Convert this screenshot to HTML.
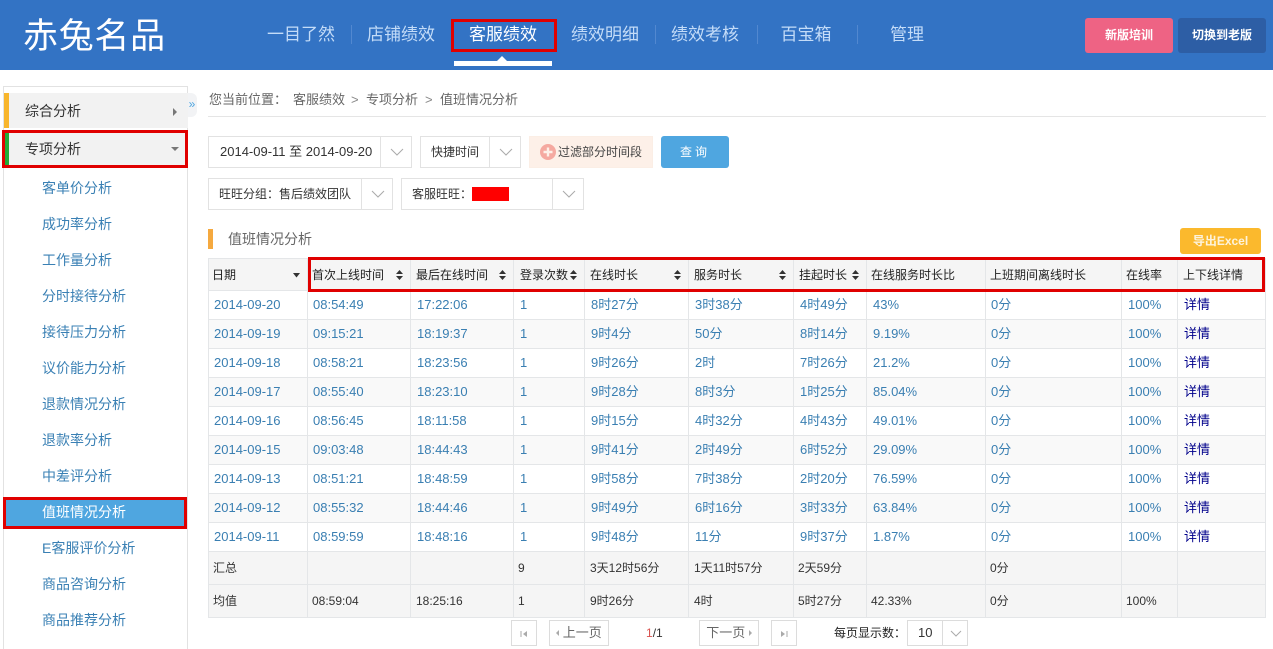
<!DOCTYPE html>
<html lang="zh">
<head>
<meta charset="utf-8">
<title>值班情况分析</title>
<style>
*{box-sizing:border-box}
html,body{margin:0;padding:0;width:1273px;height:649px;overflow:hidden;background:#fff}
body{font-family:"Liberation Sans","Noto Sans CJK SC",sans-serif;font-size:12px;color:#333;position:relative}
.a{position:absolute;white-space:nowrap}
#hd{left:0;top:0;width:1273px;height:70px;background:#3373c4}
.nav{top:22px;height:26px;line-height:26px;font-size:17px;color:#c4dcf8;width:80px;text-align:center}
.sep{top:25px;width:1px;height:19px;background:#5288d0}
.red{border:3px solid #e00000;background:transparent}
.topbtn{top:18px;width:88px;height:35px;line-height:35px;text-align:center;color:#fff;font-weight:bold;border-radius:3px;font-size:12px}
.side{left:42px;width:100px;height:20px;line-height:20px;font-size:14px;color:#3a80b4}
.bc{top:91px;height:18px;line-height:18px;font-size:13px;color:#666}
.box{border:1px solid #e2e2e2;height:32px;line-height:30px;background:#fff}
.dv{top:0;width:1px;height:30px;background:#e2e2e2;position:absolute}
.chev{position:absolute;top:11px}
table{border-collapse:collapse;table-layout:fixed;width:1057px;left:208px;top:258px;position:absolute}
td,th{border:1px solid #e4e6e8;padding:0 0 0 5px;text-align:left;font-weight:normal;overflow:hidden;white-space:nowrap;position:relative;line-height:18px}
th{height:32px;background:#f5f5f5;color:#222;font-size:12px;padding-left:4px}
th:first-child{padding-left:3px}
th:nth-child(3),th:nth-child(5),th:nth-child(6),th:nth-child(7),th:nth-child(11){padding-left:5px}
th:nth-child(4){padding-left:6px}
.r td{height:29px;font-size:13px;color:#3a7fb2;padding-left:6px}
.r td:nth-child(1),.r td:nth-child(2),.r td:nth-child(9){padding-left:5px}
.r:nth-child(even) td{background:#f9f9f9}
.r td:last-child{color:#00008b}
.s td{height:33px;font-size:12px;background:#f5f5f5;color:#333;padding-left:4px}
.s td:nth-child(3),.s td:nth-child(5),.s td:nth-child(6){padding-left:5px}
.sort{position:absolute;right:7px;top:11px;width:7px;height:10px}
.pg{top:620px;height:26px;border:1px solid #dcdcdc;line-height:24px;text-align:center;color:#666;font-size:14px;background:#fff}
.tri{display:inline-block;width:0;height:0;border:3px solid transparent;vertical-align:1px}
</style>
</head>
<body>
<div class="a" id="hd"></div>
<div class="a" style="left:23px;top:13px;height:48px;line-height:48px;font-size:35px;color:#fff;letter-spacing:.7px;font-weight:400">赤兔名品</div>

<div class="a nav" style="left:261px">一目了然</div>
<div class="a sep" style="left:351px"></div>
<div class="a nav" style="left:361px">店铺绩效</div>
<div class="a nav" style="left:463px;color:#fff">客服绩效</div>
<div class="a nav" style="left:565px">绩效明细</div>
<div class="a sep" style="left:655px"></div>
<div class="a nav" style="left:665px">绩效考核</div>
<div class="a sep" style="left:757px"></div>
<div class="a nav" style="left:766px">百宝箱</div>
<div class="a sep" style="left:857px"></div>
<div class="a nav" style="left:867px">管理</div>
<div class="a red" style="left:451px;top:19px;width:106px;height:33px"></div>
<div class="a" style="left:454px;top:61px;width:98px;height:5px;background:#fff"></div>
<div class="a" style="left:497px;top:56px;width:0;height:0;border:5px solid transparent;border-top:0;border-bottom:5px solid #fff"></div>
<div class="a topbtn" style="left:1085px;background:#ee6384">新版培训</div>
<div class="a topbtn" style="left:1178px;background:#2d5ea5">切换到老版</div>

<!-- sidebar -->
<div class="a" style="left:3px;top:86px;width:185px;height:570px;border:1px solid #e2e2e2;border-bottom:0"></div>
<div class="a" style="left:187px;top:93px;width:10px;height:24px;background:#f2f3f5;border-radius:0 6px 6px 0;color:#4fa6e0;font-size:12px;line-height:22px;text-align:center">»</div>
<div class="a" style="left:4px;top:93px;width:184px;height:35px;background:#f2f2f2"></div>
<div class="a" style="left:4px;top:93px;width:5px;height:35px;background:#f8b62d"></div>
<div class="a" style="left:25px;top:101px;height:20px;line-height:20px;font-size:14px;color:#333">综合分析</div>
<div class="a" style="left:173px;top:108px;width:0;height:0;border:4px solid transparent;border-right:0;border-left:4px solid #777"></div>
<div class="a" style="left:4px;top:131px;width:184px;height:36px;background:#f2f2f2"></div>
<div class="a" style="left:5px;top:133px;width:4px;height:32px;background:#22ac38"></div>
<div class="a" style="left:25px;top:139px;height:20px;line-height:20px;font-size:14px;color:#333">专项分析</div>
<div class="a" style="left:171px;top:147px;width:0;height:0;border:4px solid transparent;border-bottom:0;border-top:4px solid #777"></div>
<div class="a red" style="left:2px;top:130px;width:186px;height:38px"></div>

<div class="a side" style="top:178px">客单价分析</div>
<div class="a side" style="top:214px">成功率分析</div>
<div class="a side" style="top:250px">工作量分析</div>
<div class="a side" style="top:286px">分时接待分析</div>
<div class="a side" style="top:322px">接待压力分析</div>
<div class="a side" style="top:358px">议价能力分析</div>
<div class="a side" style="top:394px">退款情况分析</div>
<div class="a side" style="top:430px">退款率分析</div>
<div class="a side" style="top:466px">中差评分析</div>
<div class="a" style="left:4px;top:498px;width:183px;height:30px;background:#4fa6e0"></div>
<div class="a side" style="top:502px;color:#fff">值班情况分析</div>
<div class="a red" style="left:3px;top:497px;width:184px;height:32px"></div>
<div class="a side" style="top:538px">E客服评价分析</div>
<div class="a side" style="top:574px">商品咨询分析</div>
<div class="a side" style="top:610px">商品推荐分析</div>

<!-- breadcrumb -->
<div class="a bc" style="left:209px">您当前位置：</div>
<div class="a bc" style="left:293px">客服绩效</div>
<div class="a bc" style="left:351px;color:#888">&gt;</div>
<div class="a bc" style="left:366px">专项分析</div>
<div class="a bc" style="left:425px;color:#888">&gt;</div>
<div class="a bc" style="left:440px">值班情况分析</div>
<div class="a" style="left:208px;top:116px;width:1058px;height:1px;background:#e5e5e5"></div>

<!-- filters -->
<div class="a box" style="left:208px;top:136px;width:204px;font-size:13px;padding-left:11px">2014-09-11 至 2014-09-20
  <div class="dv" style="left:171px"></div>
  <svg class="chev" style="left:181px" width="14" height="8" viewBox="0 0 14 8"><path d="M1 1l6 6 6-6" fill="none" stroke="#aaa"/></svg>
</div>
<div class="a box" style="left:420px;top:136px;width:101px;padding-left:10px">快捷时间
  <div class="dv" style="left:68px"></div>
  <svg class="chev" style="left:78px" width="14" height="8" viewBox="0 0 14 8"><path d="M1 1l6 6 6-6" fill="none" stroke="#aaa"/></svg>
</div>
<div class="a" style="left:529px;top:136px;width:124px;height:32px;background:#fdf0e8;border:1px solid #fbeee5;line-height:30px;padding-left:28px;color:#444">过滤部分时间段</div>
<svg class="a" style="left:540px;top:144px" width="16" height="16" viewBox="0 0 16 16"><circle cx="8" cy="8" r="8" fill="#f5a9a0"/><path d="M8 3.500v9M3.500 8h9" stroke="#fdf0e8" stroke-width="2.400"/></svg>
<div class="a" style="left:661px;top:136px;width:68px;height:32px;background:#4fa6e0;border-radius:3px;color:#fff;line-height:32px;text-align:center;letter-spacing:3px">查询</div>

<div class="a box" style="left:208px;top:178px;width:185px;padding-left:10px">旺旺分组：售后绩效团队
  <div class="dv" style="left:152px"></div>
  <svg class="chev" style="left:162px" width="14" height="8" viewBox="0 0 14 8"><path d="M1 1l6 6 6-6" fill="none" stroke="#aaa"/></svg>
</div>
<div class="a box" style="left:401px;top:178px;width:183px;padding-left:10px">客服旺旺：
  <div class="dv" style="left:150px"></div>
  <svg class="chev" style="left:160px" width="14" height="8" viewBox="0 0 14 8"><path d="M1 1l6 6 6-6" fill="none" stroke="#aaa"/></svg>
</div>
<div class="a" style="left:472px;top:187px;width:37px;height:14px;background:#f00"></div>

<!-- section title -->
<div class="a" style="left:208px;top:229px;width:5px;height:20px;background:#f5a93f"></div>
<div class="a" style="left:228px;top:229px;height:20px;line-height:20px;font-size:14px;color:#666">值班情况分析</div>
<div class="a" style="left:1180px;top:228px;width:81px;height:26px;background:#fbb92d;border-radius:3px;color:#fdf3dc;line-height:26px;text-align:center;font-weight:bold">导出Excel</div>

<!-- table -->
<table>
<colgroup><col style="width:99px"><col style="width:103px"><col style="width:103px"><col style="width:71px"><col style="width:104px"><col style="width:105px"><col style="width:73px"><col style="width:119px"><col style="width:136px"><col style="width:56px"><col style="width:88px"></colgroup>
<thead><tr>
<th>日期<svg class="sort" viewBox="0 0 7 10"><path d="M0 3h7l-3.500 4.500z" fill="#333"/></svg></th>
<th>首次上线时间<svg class="sort" viewBox="0 0 7 10"><path d="M3.500 0L7 4H0zM3.500 10L7 6H0z" fill="#333"/></svg></th>
<th>最后在线时间<svg class="sort" viewBox="0 0 7 10"><path d="M3.500 0L7 4H0zM3.500 10L7 6H0z" fill="#333"/></svg></th>
<th>登录次数<svg class="sort" viewBox="0 0 7 10"><path d="M3.500 0L7 4H0zM3.500 10L7 6H0z" fill="#333"/></svg></th>
<th>在线时长<svg class="sort" viewBox="0 0 7 10"><path d="M3.500 0L7 4H0zM3.500 10L7 6H0z" fill="#333"/></svg></th>
<th>服务时长<svg class="sort" viewBox="0 0 7 10"><path d="M3.500 0L7 4H0zM3.500 10L7 6H0z" fill="#333"/></svg></th>
<th>挂起时长<svg class="sort" viewBox="0 0 7 10"><path d="M3.500 0L7 4H0zM3.500 10L7 6H0z" fill="#333"/></svg></th>
<th>在线服务时长比</th><th>上班期间离线时长</th><th>在线率</th><th>上下线详情</th>
</tr></thead>
<tbody>
<tr class="r"><td>2014-09-20</td><td>08:54:49</td><td>17:22:06</td><td>1</td><td>8时27分</td><td>3时38分</td><td>4时49分</td><td>43%</td><td>0分</td><td>100%</td><td>详情</td></tr>
<tr class="r"><td>2014-09-19</td><td>09:15:21</td><td>18:19:37</td><td>1</td><td>9时4分</td><td>50分</td><td>8时14分</td><td>9.19%</td><td>0分</td><td>100%</td><td>详情</td></tr>
<tr class="r"><td>2014-09-18</td><td>08:58:21</td><td>18:23:56</td><td>1</td><td>9时26分</td><td>2时</td><td>7时26分</td><td>21.2%</td><td>0分</td><td>100%</td><td>详情</td></tr>
<tr class="r"><td>2014-09-17</td><td>08:55:40</td><td>18:23:10</td><td>1</td><td>9时28分</td><td>8时3分</td><td>1时25分</td><td>85.04%</td><td>0分</td><td>100%</td><td>详情</td></tr>
<tr class="r"><td>2014-09-16</td><td>08:56:45</td><td>18:11:58</td><td>1</td><td>9时15分</td><td>4时32分</td><td>4时43分</td><td>49.01%</td><td>0分</td><td>100%</td><td>详情</td></tr>
<tr class="r"><td>2014-09-15</td><td>09:03:48</td><td>18:44:43</td><td>1</td><td>9时41分</td><td>2时49分</td><td>6时52分</td><td>29.09%</td><td>0分</td><td>100%</td><td>详情</td></tr>
<tr class="r"><td>2014-09-13</td><td>08:51:21</td><td>18:48:59</td><td>1</td><td>9时58分</td><td>7时38分</td><td>2时20分</td><td>76.59%</td><td>0分</td><td>100%</td><td>详情</td></tr>
<tr class="r"><td>2014-09-12</td><td>08:55:32</td><td>18:44:46</td><td>1</td><td>9时49分</td><td>6时16分</td><td>3时33分</td><td>63.84%</td><td>0分</td><td>100%</td><td>详情</td></tr>
<tr class="r"><td>2014-09-11</td><td>08:59:59</td><td>18:48:16</td><td>1</td><td>9时48分</td><td>11分</td><td>9时37分</td><td>1.87%</td><td>0分</td><td>100%</td><td>详情</td></tr>
<tr class="s"><td>汇总</td><td></td><td></td><td>9</td><td>3天12时56分</td><td>1天11时57分</td><td>2天59分</td><td></td><td>0分</td><td></td><td></td></tr>
<tr class="s"><td>均值</td><td>08:59:04</td><td>18:25:16</td><td>1</td><td>9时26分</td><td>4时</td><td>5时27分</td><td>42.33%</td><td>0分</td><td>100%</td><td></td></tr>
</tbody>
</table>
<div class="a red" style="left:308px;top:257px;width:957px;height:35px"></div>

<!-- pager -->
<div class="a pg" style="left:511px;width:26px"><svg width="8" height="8" viewBox="0 0 8 8"><path d="M1 1v6" stroke="#aaa"/><path d="M7 1v6L3 4z" fill="#aaa"/></svg></div>
<div class="a pg" style="left:549px;width:60px;font-size:13px"><span class="tri" style="border-right-color:#aaa;border-left:0"></span> 上一页</div>
<div class="a" style="left:646px;top:624px;line-height:18px;color:#333"><span style="color:#d9534f">1</span>/1</div>
<div class="a pg" style="left:699px;width:60px;font-size:13px">下一页 <span class="tri" style="border-left-color:#aaa;border-right:0"></span></div>
<div class="a pg" style="left:771px;width:26px"><svg width="8" height="8" viewBox="0 0 8 8"><path d="M7 1v6" stroke="#aaa"/><path d="M1 1v6l4-3z" fill="#aaa"/></svg></div>
<div class="a" style="left:834px;top:624px;line-height:18px;color:#222">每页显示数：</div>
<div class="a pg" style="left:907px;width:61px;text-align:left;padding-left:10px;color:#333;font-size:13px">10
  <div class="dv" style="left:34px;height:24px;background:#dcdcdc"></div>
  <svg class="chev" style="left:42px;top:9px" width="12" height="7" viewBox="0 0 12 7"><path d="M1 1l5 5 5-5" fill="none" stroke="#aaa"/></svg>
</div>
</body>
</html>
